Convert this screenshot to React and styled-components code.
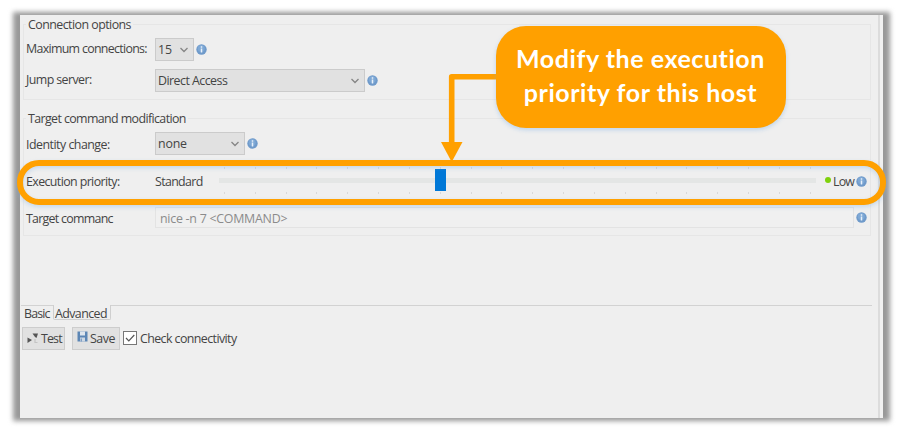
import * as React from 'react';
import styled, { createGlobalStyle, css } from 'styled-components';

const GlobalStyle = createGlobalStyle`
  * {
    box-sizing: border-box;
  }
  body {
    margin: 0;
    background: #fff;
    color: #444;
    font-family: 'Open Sans', 'Noto Sans', sans-serif;
    font-size: 12.4px;
    line-height: 16px;
    overflow: hidden;
  }
`;

const Page = styled.main`
  position: relative;
  width: 903px;
  height: 433px;
  padding: 15px 20px;
`;

const Window = styled.section`
  position: relative;
  display: flex;
  width: 863px;
  height: 403px;
  background: #efefef;
  &::before {
    content: '';
    position: absolute;
    inset: -3px -7px;
    z-index: -1;
    background: #989898;
    filter: blur(2.8px);
  }
`;

const Content = styled.div`
  flex: 1;
  min-width: 0;
  padding: 1px 0 0 1px;
`;

const Divider = styled.div`
  width: 5px;
  background: #f1f1f1;
  border-left: 2px solid #dcdcdc;
`;

const Group = styled.fieldset`
  width: 848px;
  height: ${p => p.$height}px;
  margin: 0 0 ${p => p.$gap}px 2px;
  padding: 0 0 0 2px;
  border: 1px solid #e6e6e6;
`;

const Legend = styled.legend`
  height: 16px;
  padding: 0 2px;
  line-height: 18px;
  white-space: nowrap;
  letter-spacing: ${p => p.$track || 0}px;
`;

const Row = styled.div`
  display: flex;
  align-items: center;
  height: ${p => p.$height}px;
  margin-top: ${p => p.$top || 0}px;
`;

const Label = styled.label`
  flex: none;
  width: 129px;
  padding-bottom: ${p => p.$lift || 0}px;
  padding-top: ${p => p.$drop || 0}px;
  white-space: nowrap;
  letter-spacing: ${p => p.$track || 0}px;
`;

const Text = styled.span`
  white-space: nowrap;
  letter-spacing: ${p => p.$track || 0}px;
`;

const SelectBox = styled.div`
  display: flex;
  align-items: center;
  justify-content: space-between;
  width: ${p => p.$width}px;
  height: 23px;
  padding: 1px 4px 0 2px;
  background: #e1e1e1;
  border: 1px solid #cbcbcb;
`;

const PriorityName = styled.div`
  width: 64px;
  padding-top: 2px;
  white-space: nowrap;
  letter-spacing: ${p => p.$track || 0}px;
`;

const Slider = styled.div`
  display: grid;
  grid-template-rows: 2px 9px 5px 9px 2px;
  width: 597px;
  height: 27px;
`;

const Ticks = styled.div`
  display: flex;
  justify-content: space-between;
  padding: 0 5px;
  i {
    width: 1px;
    background: #d9d9d9;
  }
`;

const Track = styled.div`
  position: relative;
  grid-row: 3;
  background: #e4e6e5;
`;

const Thumb = styled.div`
  position: absolute;
  top: -9px;
  width: 11px;
  height: 22px;
  margin-left: -5.5px;
  background: #0078d7;
`;

const Dot = styled.span`
  width: 6px;
  height: 6px;
  margin: -2px 2px 0 9px;
  border-radius: 50%;
  background: #7fd10c;
`;

const Level = styled.span`
  width: 21px;
  padding-top: 2px;
  white-space: nowrap;
  letter-spacing: -0.8px;
`;

const CommandField = styled.div`
  width: 699px;
  height: 21px;
  padding: 3px 4px 0;
  border: 1px solid #e3e3e3;
  background: #f0f0f0;
  color: #8b8b8b;
  line-height: 15px;
  white-space: nowrap;
  letter-spacing: ${p => p.$track || 0}px;
`;

const TabBar = styled.nav`
  display: flex;
  width: 851px;
  height: 15px;
`;

const Tab = styled.div`
  width: ${p => p.$width}px;
  padding-left: ${p => p.$pad}px;
  line-height: 15px;
  white-space: nowrap;
  letter-spacing: ${p => p.$track || 0}px;
  ${p =>
    p.$active
      ? css`
          padding-top: 1px;
          border: solid #cfcfcf;
          border-width: 0 1px 1px;
          border-radius: 0 0 2px 2px;
        `
      : css`
          border-top: 1px solid #d2d2d2;
        `}
`;

const TabRest = styled.div`
  flex: 1;
  border-top: 1px solid #d2d2d2;
`;

const Actions = styled.div`
  display: flex;
  align-items: center;
  height: 23px;
  margin: 7px 0 0 1px;
`;

const Button = styled.div`
  display: flex;
  align-items: center;
  width: ${p => p.$width}px;
  height: 23px;
  margin-right: ${p => p.$gap}px;
  padding: 1px 0 0 4px;
  gap: 2px;
  background: #e1e1e1;
  border: 1px solid #cdcdcd;
  svg {
    flex: none;
    margin-bottom: 4px;
  }
`;

const Check = styled.span`
  display: flex;
  width: 14px;
  height: 14px;
  margin: 0 3px 1px 0;
  background: #fff;
  border: 1px solid #777;
`;

const Highlight = styled.div`
  position: absolute;
  left: 17px;
  top: 160px;
  width: 869px;
  height: 45px;
  border: 6px solid #ffa000;
  border-radius: 22px;
  filter: drop-shadow(0 2px 2px rgba(120, 175, 230, 0.35));
`;

const Callout = styled.div`
  position: absolute;
  left: 496px;
  top: 26px;
  width: 290px;
  height: 102px;
  padding: 15px 1px 0 0;
  border-radius: 30px;
  background: #ffa000;
  box-shadow: 0 2px 4px rgba(120, 175, 230, 0.4);
  color: #fff;
  font: 700 25px/34px Lato, sans-serif;
  text-align: center;
  white-space: nowrap;
  span {
    display: block;
    letter-spacing: 0.55px;
  }
`;

const Arrow = styled.svg`
  position: absolute;
  left: 436px;
  top: 70px;
`;

const InfoSvg = styled.svg`
  flex: none;
  margin: ${p => p.$top || 0}px 0 0 2px;
`;

const Info = ({ top }) => (
  <InfoSvg $top={top} width="11" height="11" viewBox="0 0 11 11">
    <circle cx="5.5" cy="5.5" r="5.2" fill="#6f9aca" />
    <circle cx="5.2" cy="4.5" r="3.5" fill="#7ea8d5" />
    <path d="M5.5 2.3v1.4M5.5 4.6v3.8" stroke="#e9f1fa" strokeWidth="1.5" />
  </InfoSvg>
);

const Chevron = () => (
  <svg width="10" height="10" viewBox="0 0 10 10">
    <path d="M1.5 3L5 6.5 8.5 3" fill="none" stroke="#858585" strokeWidth="1.3" />
  </svg>
);

const TestIcon = () => (
  <svg width="12" height="13" viewBox="0 0 12 13">
    <path d="M.5 6.5l4.5 2.5-4.5 3z" fill="#555" />
    <path d="M5.5 2.5h5.5l-1.5 4.500-1.500-1z" fill="#555" />
    <path d="M8 8v3.500h2.500" fill="none" stroke="#c4c4c4" strokeWidth="1.2" />
  </svg>
);

const SaveIcon = () => (
  <svg width="11" height="12" viewBox="0 0 11 12">
    <path d="M.5.5h10v10H.5z" fill="#5c86b5" />
    <path d="M3 .5h5v4H3z" fill="#dfe6ee" />
    <path d="M3 6.5h5v4H3z" fill="#cfd9e4" />
    <path d="M4.2 7.5v3" stroke="#5c86b5" />
  </svg>
);

const Select = ({ width, track, children }) => (
  <SelectBox $width={width}>
    <Text $track={track}>{children}</Text>
    <Chevron />
  </SelectBox>
);

const STEPS = 19;
const ticks = Array.from({ length: STEPS + 1 }, (_, i) => <i key={i} />);

const PrioritySlider = ({ value }) => (
  <Slider>
    <Ticks>{ticks}</Ticks>
    <Track>
      <Thumb style={{ left: 5.5 + (value / STEPS) * 586 }} />
    </Track>
    <Ticks style={{ gridRow: 5 }}>{ticks}</Ticks>
  </Slider>
);

const App = () => (
  <Page>
    <GlobalStyle />
    <Window>
      <Content>
        <Group $height={84} $gap={10}>
          <Legend $track={-0.54}>Connection options</Legend>
          <Row $height={23} $top={6}>
            <Label $lift={2} $track={-0.69}>Maximum connections:</Label>
            <Select width={39} track={-0.2}>15</Select>
            <Info />
          </Row>
          <Row $height={23} $top={8}>
            <Label $lift={2} $track={-0.58}>Jump server:</Label>
            <Select width={210} track={-0.53}>Direct Access</Select>
            <Info top={-1} />
          </Row>
        </Group>
        <Group $height={126} $gap={69}>
          <Legend $track={-0.6}>Target command modification</Legend>
          <Row $height={23} $top={6}>
            <Label $drop={2} $track={-0.51}>Identity change:</Label>
            <Select width={90} track={-0.2}>none</Select>
            <Info top={-1} />
          </Row>
          <Row $height={27} $top={12}>
            <Label $drop={2} $track={-0.6}>Execution priority:</Label>
            <PriorityName $track={-0.65}>Standard</PriorityName>
            <PrioritySlider value={7} />
            <Dot />
            <Level>Low</Level>
            <Info top={1} />
          </Row>
          <Row $height={21} $top={13}>
            <Label $drop={2} $track={-0.72}>Target commanc</Label>
            <CommandField $track={-0.25}>nice -n 7 &lt;COMMAND&gt;</CommandField>
            <Info />
          </Row>
        </Group>
        <TabBar>
          <Tab $width={32} $pad={3} $track={-0.85}>Basic</Tab>
          <Tab $width={58} $pad={1} $track={-0.58} $active>Advanced</Tab>
          <TabRest />
        </TabBar>
        <Actions>
          <Button $width={43} $gap={7}>
            <TestIcon />
            <Text $track={-0.85}>Test</Text>
          </Button>
          <Button $width={48} $gap={3}>
            <SaveIcon />
            <Text $track={-0.45}>Save</Text>
          </Button>
          <Check>
            <svg width="12" height="12" viewBox="0 0 12 12">
              <path d="M2 6l2.8 2.8L10.3 3" fill="none" stroke="#555" strokeWidth="1.2" />
            </svg>
          </Check>
          <Text $track={-0.58}>Check connectivity</Text>
        </Actions>
      </Content>
      <Divider />
    </Window>
    <Highlight />
    <Arrow width="62" height="92" viewBox="0 0 62 92">
      <path d="M62 6.7H15.7V74" fill="none" stroke="#ffa000" strokeWidth="5.6" strokeLinejoin="round" />
      <path d="M5 72h21.5L15.7 92z" fill="#ffa000" />
    </Arrow>
    <Callout>
      <span>Modify the execution</span>
      <span>priority for this host</span>
    </Callout>
  </Page>
);

export default App;
